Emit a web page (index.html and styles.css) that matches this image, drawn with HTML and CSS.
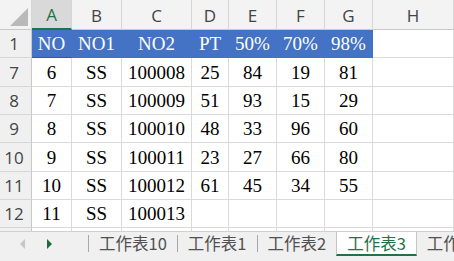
FILE: index.html
```html
<!DOCTYPE html>
<html lang="zh-Hant">
<head>
<meta charset="utf-8">
<link rel="stylesheet" href="styles.css">
</head>
<body>
<div class="sheet">
  <div class="grid">
    <div class="ch corner"><svg class="tri" width="18" height="18" viewBox="0 0 18 18"><polygon points="18,0 18,18 0,18" fill="#b9b9b9"/></svg></div>
    <div class="ch sel">A</div><div class="ch">B</div><div class="ch">C</div><div class="ch">D</div><div class="ch">E</div><div class="ch">F</div><div class="ch">G</div><div class="ch">H</div>

    <div class="rh">1</div>
    <div class="c hd a1">NO</div><div class="c hd">NO1</div><div class="c hd">NO2</div><div class="c hd">PT</div><div class="c hd">50%</div><div class="c hd">70%</div><div class="c hd">98%</div><div class="c"></div>

    <div class="rh">7</div>
    <div class="c">6</div><div class="c">SS</div><div class="c">100008</div><div class="c">25</div><div class="c">84</div><div class="c">19</div><div class="c">81</div><div class="c"></div>

    <div class="rh">8</div>
    <div class="c">7</div><div class="c">SS</div><div class="c">100009</div><div class="c">51</div><div class="c">93</div><div class="c">15</div><div class="c">29</div><div class="c"></div>

    <div class="rh">9</div>
    <div class="c">8</div><div class="c">SS</div><div class="c">100010</div><div class="c">48</div><div class="c">33</div><div class="c">96</div><div class="c">60</div><div class="c"></div>

    <div class="rh">10</div>
    <div class="c">9</div><div class="c">SS</div><div class="c">100011</div><div class="c">23</div><div class="c">27</div><div class="c">66</div><div class="c">80</div><div class="c"></div>

    <div class="rh">11</div>
    <div class="c">10</div><div class="c">SS</div><div class="c">100012</div><div class="c">61</div><div class="c">45</div><div class="c">34</div><div class="c">55</div><div class="c"></div>

    <div class="rh">12</div>
    <div class="c">11</div><div class="c">SS</div><div class="c">100013</div><div class="c"></div><div class="c"></div><div class="c"></div><div class="c"></div><div class="c"></div>

    <div class="rh"></div>
    <div class="c"></div><div class="c"></div><div class="c"></div><div class="c"></div><div class="c"></div><div class="c"></div><div class="c"></div><div class="c"></div>
  </div>

  <div class="tabs">
    <div class="nav">
      <svg width="8" height="10" viewBox="0 0 8 10"><polygon points="6,0 6,10 1,5" fill="#c6c6c6"/></svg>
      <svg width="8" height="10" viewBox="0 0 8 10"><polygon points="2,0 2,10 7,5" fill="#1e6b3c"/></svg>
    </div>
    <div class="sep"></div>
    <div class="tab">工作表10</div>
    <div class="sep"></div>
    <div class="tab">工作表1</div>
    <div class="sep"></div>
    <div class="tab">工作表2</div>
    <div class="tab active">工作表3</div>
    <div class="tab">工作表4</div>
  </div>
</div>
</body>
</html>
```

FILE: styles.css
```css
html, body {
  margin: 0;
  padding: 0;
  background: #ffffff;
}

.sheet {
  width: 454px;
  height: 261px;
  overflow: hidden;
  display: flex;
  flex-direction: column;
}

.grid {
  height: 231px;
  flex: none;
  overflow: hidden;
  display: grid;
  grid-template-columns: 32px 40px 50px 70px 37px 48px 48px 48px 81px;
  grid-template-rows: 30px 28px 29px 28px 28px 29px 28px 28px 28px;
}

.ch {
  box-sizing: border-box;
  background: #f3f3f3;
  border-right: 1px solid #d6d6d6;
  border-bottom: 1px solid #c8c8c8;
  font-family: "Open Sans", "Liberation Sans", sans-serif;
  font-size: 17px;
  color: #444444;
  display: flex;
  align-items: center;
  justify-content: center;
  padding-top: 1px;
}

.ch.corner {
  justify-content: flex-end;
  align-items: flex-end;
  padding: 0 3px 3px 0;
}

.tri {
  display: block;
}

.ch.sel {
  background: #d9d9d9;
  color: #217346;
  border-bottom: 2px solid #217346;
}

.rh {
  box-sizing: border-box;
  background: #f0f0f0;
  border-right: 1px solid #c8c8c8;
  border-bottom: 1px solid #d6d6d6;
  font-family: "Open Sans", "Liberation Sans", sans-serif;
  font-size: 17px;
  color: #444444;
  display: flex;
  align-items: center;
  justify-content: center;
  padding-right: 3px;
}

.c {
  box-sizing: border-box;
  border-right: 1px solid #dadada;
  border-bottom: 1px solid #dadada;
  font-family: "Liberation Serif", serif;
  font-size: 19px;
  color: #000000;
  display: flex;
  align-items: center;
  justify-content: center;
  padding-top: 1px;
}

.c.hd {
  background: #4472c4;
  color: #ffffff;
  border-right-color: #4472c4;
  border-bottom-color: #4472c4;
}

.c.a1 {
  border-bottom: 1px solid #217346;
}

.tabs {
  flex: 1;
  background: #f0f0f0;
  border-top: 1px solid #d0d0d0;
  display: flex;
  align-items: flex-start;
  font-family: "Noto Sans CJK TC", "Noto Sans", sans-serif;
  font-size: 16.5px;
  color: #505050;
}

.nav {
  flex: none;
  width: 88px;
  height: 23px;
  display: flex;
  align-items: center;
  gap: 18px;
  padding-left: 19px;
  box-sizing: border-box;
}

.nav svg {
  display: block;
}

.sep {
  flex: none;
  width: 1px;
  height: 17px;
  margin-top: 3px;
  background: #a8a8a8;
}

.tab {
  flex: none;
  height: 23px;
  padding: 0 10px;
  display: flex;
  align-items: center;
  line-height: 1;
  white-space: nowrap;
}

.tab.active {
  box-sizing: border-box;
  height: 24px;
  background: #ffffff;
  color: #217346;
  border-left: 1px solid #c4c4c4;
  border-right: 1px solid #c4c4c4;
  border-bottom: 2px solid #217346;
  padding: 0 10px;
}
```
